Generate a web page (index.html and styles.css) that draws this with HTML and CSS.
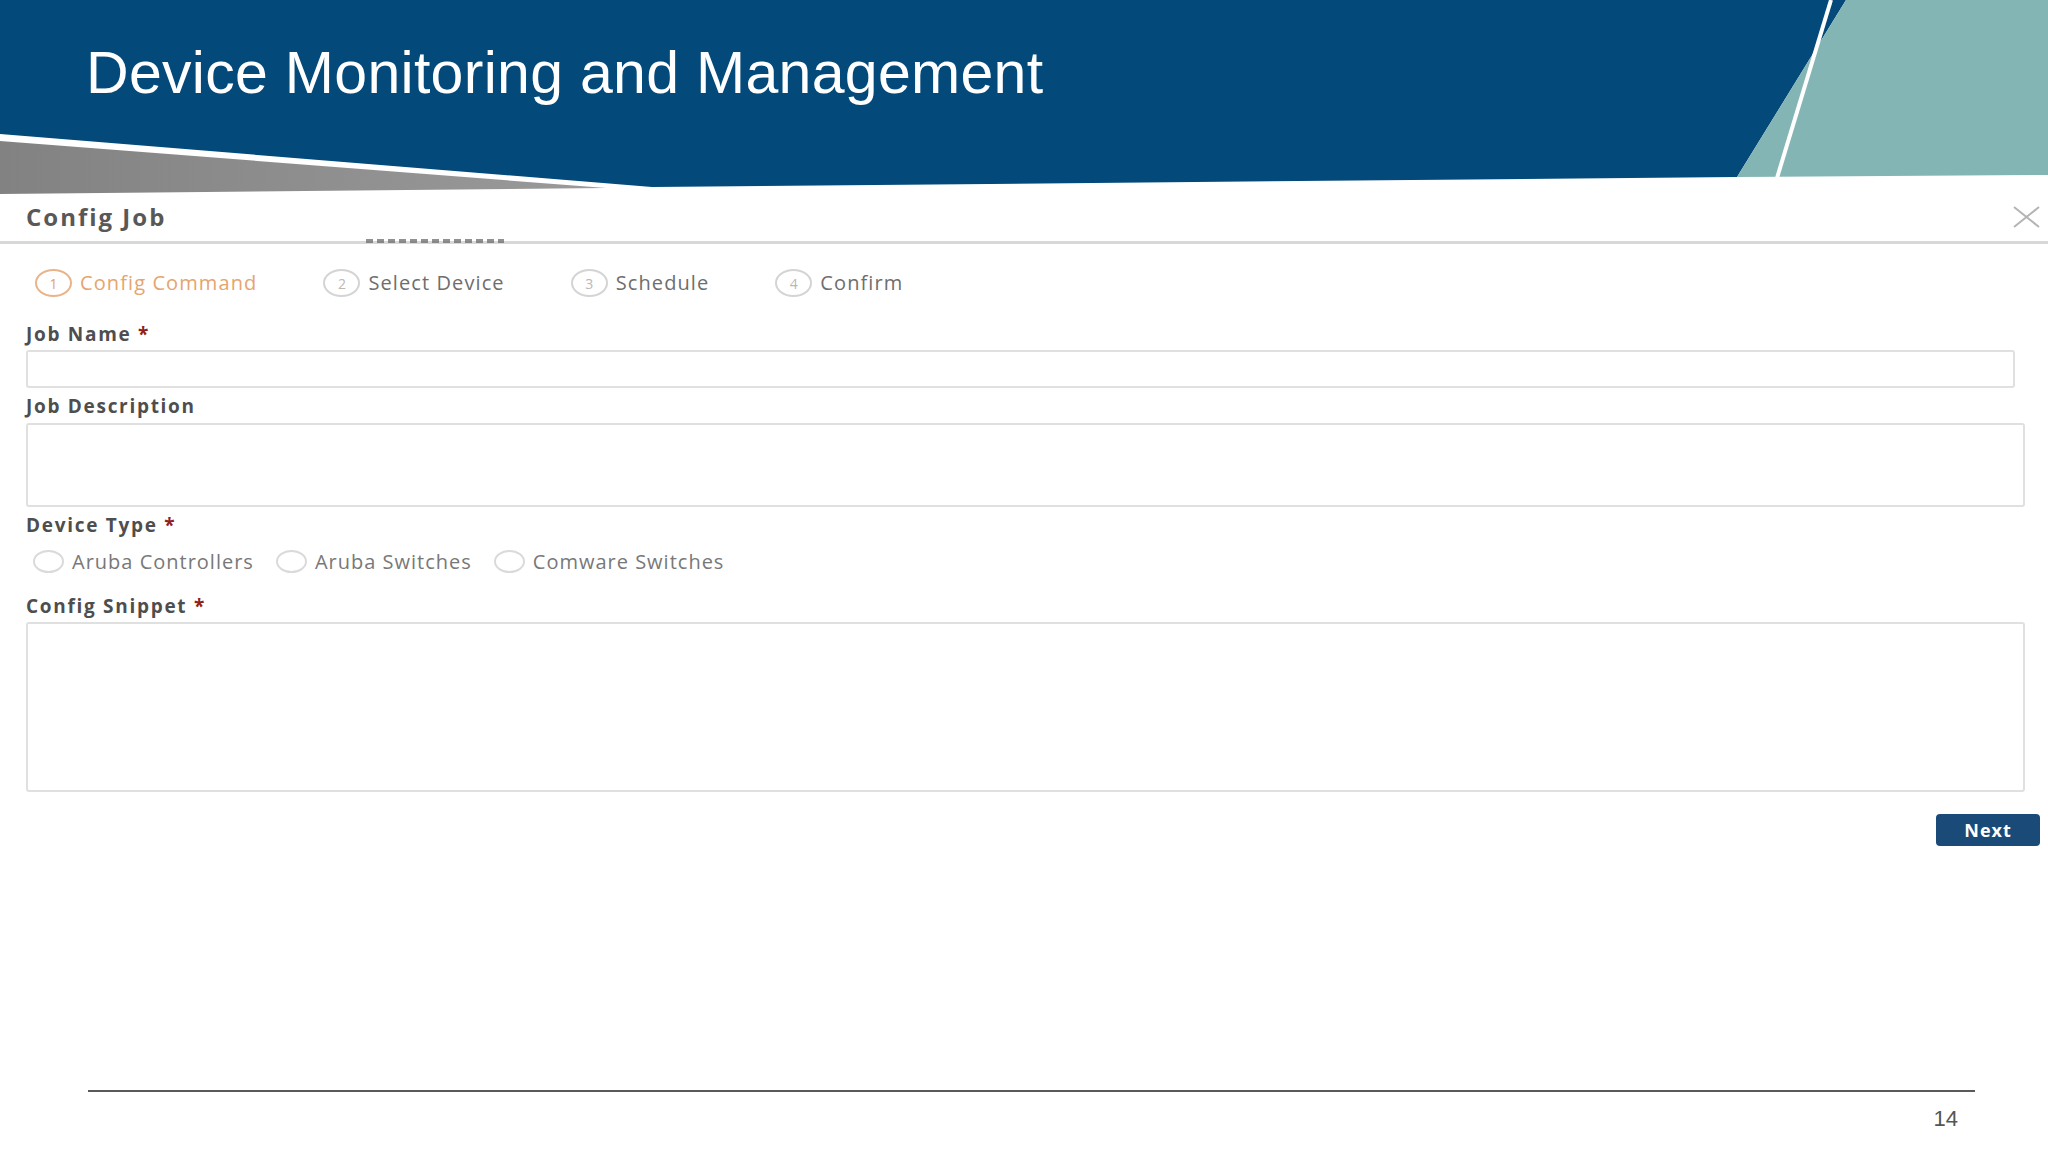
FILE: index.html
```html
<!DOCTYPE html>
<html lang="en">
<head>
<meta charset="utf-8">
<title>Device Monitoring and Management</title>
<link rel="stylesheet" href="styles.css">
</head>
<body>
<header class="slide-head">
  <svg class="head-art" width="2048" height="196" viewBox="0 0 2048 196" aria-hidden="true">
    <defs>
      <linearGradient id="gr" x1="0" y1="0" x2="1" y2="0">
        <stop offset="0" stop-color="#828282"/>
        <stop offset="1" stop-color="#9a9a9a"/>
      </linearGradient>
    </defs>
    <polygon points="0,141 606,188 0,194" fill="url(#gr)"/>
    <polygon points="0,0 1846,0 1737,177 652,187 0,134" fill="#03497a"/>
    <polygon points="1846,0 2048,0 2048,175 1737,177" fill="#84b5b5"/>
    <line x1="1777" y1="178" x2="1831" y2="0" stroke="#ffffff" stroke-width="4"/>
  </svg>
  <h1 class="slide-title">Device Monitoring and Management</h1>
</header>

<section class="dialog">
  <div class="dlg-head">
    <h2 class="dlg-title">Config Job</h2>
    <span class="close" aria-label="Close">
      <svg width="27" height="22" viewBox="0 0 27 22"><path d="M1 1 L26 21 M26 1 L1 21" stroke="#b4b4b4" stroke-width="2" fill="none"/></svg>
    </span>
  </div>
  <div class="ghost" aria-hidden="true"></div>

  <ol class="steps">
    <li class="step active"><span class="num">1</span><span class="step-label">Config Command</span></li>
    <li class="step"><span class="num">2</span><span class="step-label">Select Device</span></li>
    <li class="step"><span class="num">3</span><span class="step-label">Schedule</span></li>
    <li class="step"><span class="num">4</span><span class="step-label">Confirm</span></li>
  </ol>

  <form class="form">
    <label class="lbl lbl-first">Job Name <span class="req">*</span></label>
    <input class="input" type="text">

    <label class="lbl">Job Description</label>
    <textarea class="area area-desc"></textarea>

    <label class="lbl">Device Type <span class="req">*</span></label>
    <div class="radios">
      <span class="radio"><span class="dot"></span>Aruba Controllers</span>
      <span class="radio"><span class="dot"></span>Aruba Switches</span>
      <span class="radio"><span class="dot"></span>Comware Switches</span>
    </div>

    <label class="lbl lbl-snippet">Config Snippet <span class="req">*</span></label>
    <textarea class="area area-snippet"></textarea>

    <button class="next" type="button">Next</button>
  </form>
</section>

<footer class="slide-foot">
  <span class="page-num">14</span>
</footer>
</body>
</html>
```

FILE: styles.css
```css
* { box-sizing: border-box; }

html, body {
  margin: 0;
  padding: 0;
}

body {
  width: 2048px;
  height: 1152px;
  overflow: hidden;
  background: #ffffff;
  display: flex;
  flex-direction: column;
  font-family: "Open Sans", "Liberation Sans", sans-serif;
}

/* ---------- slide header ---------- */
.slide-head {
  position: relative;
  height: 187px;
  flex: none;
}

.head-art {
  position: absolute;
  left: 0;
  top: 0;
  display: block;
}

.slide-title {
  position: relative;
  margin: 0;
  padding: 44px 0 0 86px;
  font-family: "Liberation Sans", Arial, sans-serif;
  font-weight: normal;
  font-size: 59px;
  line-height: 59px;
  letter-spacing: 0.3px;
  color: #ffffff;
}

/* ---------- dialog ---------- */
.dialog {
  position: relative;
  flex: none;
}

.dlg-head {
  position: relative;
  height: 57px;
  padding: 6px 8px 0 26px;
  border-bottom: 3px solid #d8d8d8;
  display: flex;
  align-items: center;
  justify-content: space-between;
}

.dlg-title {
  margin: 0;
  font-size: 24px;
  font-weight: 700;
  letter-spacing: 2px;
  color: #585858;
  line-height: 30px;
}

.close {
  display: flex;
  width: 27px;
  height: 22px;
}

/* remnant of a clipped heading peeking under the divider */
.ghost {
  position: absolute;
  left: 366px;
  top: 52px;
  width: 138px;
  height: 4px;
  z-index: 2;
  background: repeating-linear-gradient(90deg, #6c6c6c 0 7px, transparent 7px 11px);
  opacity: 0.75;
}

/* steps */
.steps {
  list-style: none;
  margin: 0;
  padding: 25px 0 0 35px;
  display: flex;
  gap: 66px;
}

.step {
  display: flex;
  align-items: center;
  gap: 8px;
  height: 28px;
}

.num {
  width: 37px;
  height: 28px;
  border: 2px solid #d4d4d4;
  border-radius: 50%;
  display: flex;
  align-items: center;
  justify-content: center;
  font-size: 14px;
  color: #b8b8b8;
}

.step-label {
  font-size: 20px;
  letter-spacing: 1.1px;
  color: #6e6e6e;
  line-height: 28px;
  white-space: nowrap;
}

.step.active .num {
  border-color: #e9b48a;
  color: #e3a06a;
}

.step.active .step-label {
  color: #e6a46e;
}

/* form */
.form {
  display: flex;
  flex-direction: column;
  padding: 0 8px 0 26px;
}

.lbl {
  display: block;
  margin-top: 6px;
  margin-bottom: 5px;
  font-size: 19px;
  font-weight: 700;
  letter-spacing: 1.7px;
  line-height: 24px;
  color: #4e4e4e;
}

.lbl-first {
  margin-top: 25px;
  margin-bottom: 4px;
}

.lbl-snippet {
  margin-top: 21px;
  margin-bottom: 4px;
}

.req {
  color: #8e2020;
}

.input,
.area {
  display: block;
  margin: 0;
  border: 2px solid #e0e0e0;
  border-radius: 3px;
  background: #ffffff;
  font: inherit;
  resize: none;
  outline: none;
}

.input {
  height: 38px;
  width: calc(100% - 25px);
}

.area {
  width: calc(100% - 15px);
}

.area-desc { height: 84px; }
.area-snippet { height: 170px; }

.radios {
  display: flex;
  gap: 22px;
  padding-left: 7px;
  margin-top: 7px;
  height: 24px;
  align-items: center;
}

.radio {
  display: flex;
  align-items: center;
  gap: 8px;
  font-size: 20px;
  letter-spacing: 1px;
  color: #787878;
  white-space: nowrap;
}

.dot {
  width: 31px;
  height: 23px;
  border: 2px solid #dadada;
  border-radius: 50%;
}

.next {
  align-self: flex-end;
  margin-top: 22px;
  width: 104px;
  height: 32px;
  border: none;
  border-radius: 4px;
  background: #1a4a78;
  color: #ffffff;
  font-family: "Open Sans", "Liberation Sans", sans-serif;
  font-size: 18px;
  font-weight: 700;
  letter-spacing: 1px;
  padding: 0;
}

/* ---------- footer ---------- */
.slide-foot {
  margin: auto 73px 0 88px;
  height: 62px;
  border-top: 2px solid #5a5a5a;
  padding: 15px 17px 0 0;
  display: flex;
  justify-content: flex-end;
}

.page-num {
  font-family: "Liberation Sans", Arial, sans-serif;
  font-size: 22px;
  line-height: 24px;
  color: #555555;
}
```
